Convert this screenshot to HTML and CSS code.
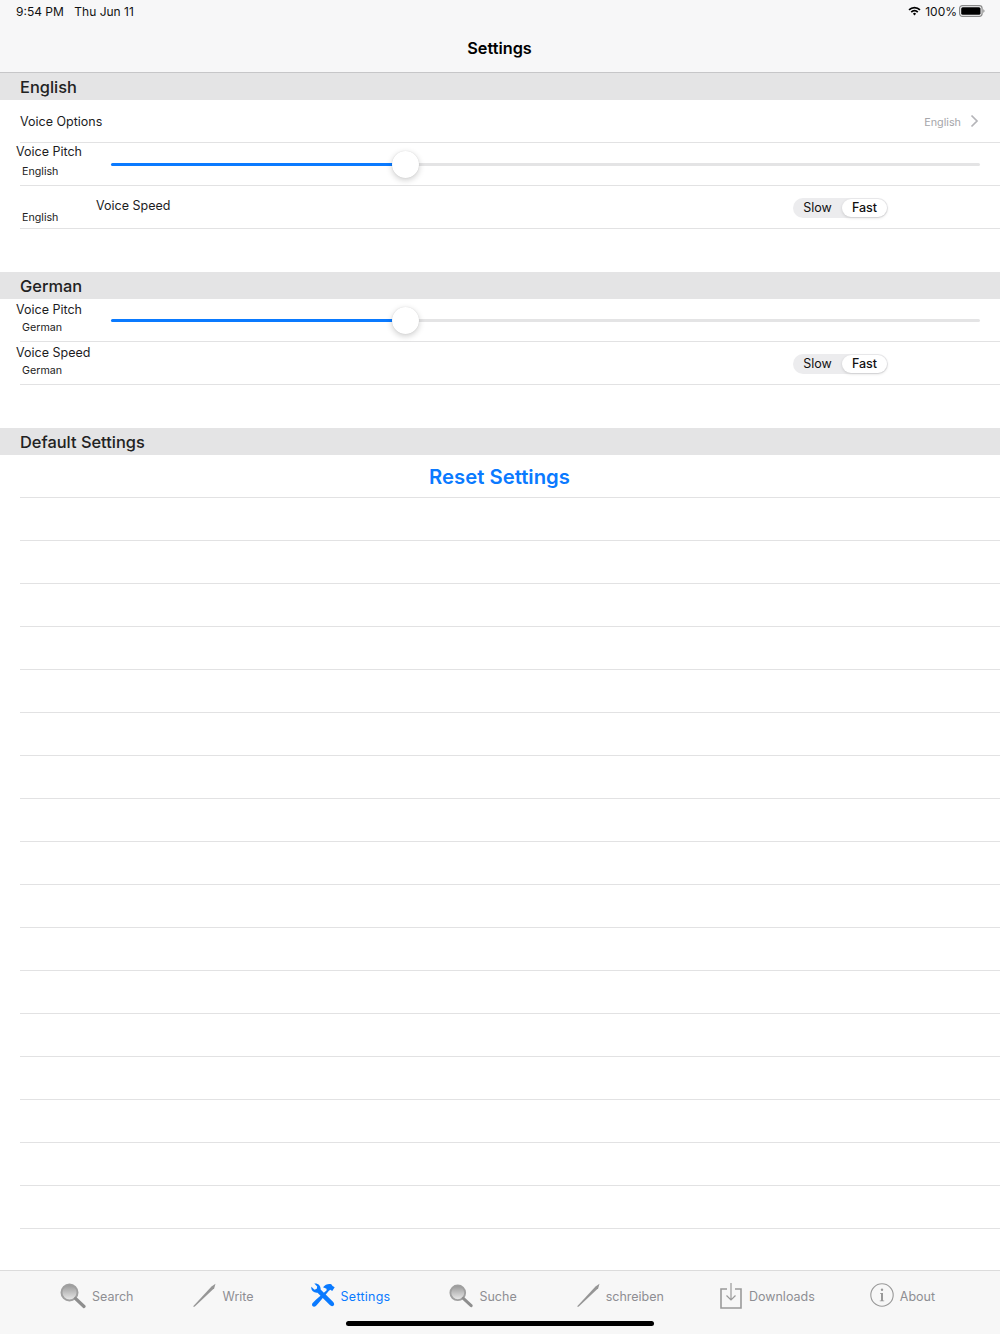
FILE: index.html
```html
<!DOCTYPE html>
<html lang="en">
<head>
<meta charset="utf-8">
<title>Settings</title>
<link rel="stylesheet" href="styles.css">
</head>
<body>
<div class="app">
  <header class="nav">
    <div class="status">
      <div class="status-left"><span>9:54 PM</span><span>Thu Jun 11</span></div>
      <div class="status-right">
        <svg class="wifi" viewBox="0 0 14 11" width="13" height="10"><path d="M1 4.200A8.500 8.500 0 0 1 13 4.200M3.400 6.700a5.100 5.100 0 0 1 7.200 0" fill="none" stroke="#000" stroke-width="1.900"/><path d="M5.300 8.400a2.400 2.400 0 0 1 3.400 0L7 10.400z" fill="#000"/></svg>
        <span>100%</span>
        <svg class="battery" viewBox="0 0 26 12" width="26" height="12"><rect x=".6" y=".6" width="22.500" height="10.800" rx="2.800" fill="none" stroke="#8a8a8a" stroke-width="1.200"/><rect x="2.200" y="2.200" width="19.300" height="7.600" rx="1.500" fill="#000"/><path d="M24.300 4.200c.8.200 1.200 1 1.200 1.800s-.4 1.600-1.200 1.800z" fill="#8a8a8a"/></svg>
      </div>
    </div>
    <h1 class="title">Settings</h1>
  </header>

  <main>
    <h2 class="section">English</h2>
    <div class="row row-options">
      <span class="label">Voice Options</span>
      <span class="detail">English</span>
      <svg class="chevron" viewBox="0 0 9 14" width="9" height="14"><path d="M1.500 1.500 7 7l-5.500 5.500" fill="none" stroke="#b4b4b8" stroke-width="1.700"/></svg>
    </div>
    <div class="row">
      <div class="stack stack-en"><span class="label">Voice Pitch</span><span class="sub">English</span></div>
      <div class="slider"><div class="fill" style="width:33.800%"><span class="thumb"></span></div></div>
    </div>
    <div class="row">
      <span class="sub sub-en">English</span>
      <span class="label label-en">Voice Speed</span>
      <div class="segment"><span class="seg">Slow</span><span class="seg seg-on">Fast</span></div>
    </div>
    <div class="spacer"></div>

    <h2 class="section">German</h2>
    <div class="row">
      <div class="stack"><span class="label">Voice Pitch</span><span class="sub">German</span></div>
      <div class="slider"><div class="fill" style="width:33.800%"><span class="thumb"></span></div></div>
    </div>
    <div class="row">
      <div class="stack"><span class="label">Voice Speed</span><span class="sub">German</span></div>
      <div class="segment"><span class="seg">Slow</span><span class="seg seg-on">Fast</span></div>
    </div>
    <div class="spacer"></div>

    <h2 class="section">Default Settings</h2>
    <div class="row row-reset"><a class="reset">Reset Settings</a></div>
    <div class="row"></div><div class="row"></div><div class="row"></div><div class="row"></div>
    <div class="row"></div><div class="row"></div><div class="row"></div><div class="row"></div>
    <div class="row"></div><div class="row"></div><div class="row"></div><div class="row"></div>
    <div class="row"></div><div class="row"></div><div class="row"></div><div class="row"></div>
    <div class="row"></div>
  </main>

  <nav class="tabs">
    <a class="tab">
      <svg class="icon" viewBox="0 0 26 26" width="26" height="26"><defs><linearGradient id="lens" x1="0" y1="0" x2="0" y2="1"><stop offset="0" stop-color="#979797"/><stop offset="1" stop-color="#ececec"/></linearGradient></defs><circle cx="9.500" cy="9.500" r="8" fill="url(#lens)" stroke="#a0a0a0" stroke-width="2"/><path d="M15.500 15.500l8.500 8" stroke="#8e8e8e" stroke-width="3.200" stroke-linecap="round"/></svg>
      <span>Search</span>
    </a>
    <a class="tab tab-write">
      <svg class="icon" viewBox="0 0 24 24" width="24" height="24"><path d="M1 23.500 19.500 3.500 23.500.8l-1.300 4.500L2.500 23.800z" fill="#969696"/></svg>
      <span>Write</span>
    </a>
    <a class="tab tab-on">
      <svg class="icon" viewBox="0 0 24 24" width="24" height="24"><g fill="#0a7aff"><path d="M.4 3.800 3.500 6.700l2.300-.9.400-2.400L3.300.6C6.500-.2 10 2.500 9.600 6.400L22 18.800c1.300 1.300 1.500 2.800.6 3.800-1 1-2.600.8-3.800-.5L6.500 9.700C2.800 10.200-.4 7.200.4 3.800z"/><path d="M12 4.300C14 1.300 18 .3 20.300 1.300l1.300 1.600 2.100 1.300-2.500 3.700-1.800-1.100-1.500.9L7.800 19.800l-2.900 3.100c-1.100 1-2.600 1-3.400.1-.8-.9-.6-2.300.4-3.300l3-3L15.700 7.300l-.2-1.600z"/></g></svg>
      <span>Settings</span>
    </a>
    <a class="tab tab-suche">
      <svg class="icon" viewBox="0 0 26 26" width="24" height="26"><circle cx="9.500" cy="9.500" r="8" fill="url(#lens)" stroke="#a0a0a0" stroke-width="2"/><path d="M15.500 15.500l8.500 8" stroke="#8e8e8e" stroke-width="3.200" stroke-linecap="round"/></svg>
      <span>Suche</span>
    </a>
    <a class="tab tab-schreiben">
      <svg class="icon" viewBox="0 0 24 24" width="24" height="24"><path d="M1 23.500 19.500 3.500 23.500.8l-1.300 4.500L2.500 23.800z" fill="#969696"/></svg>
      <span>schreiben</span>
    </a>
    <a class="tab tab-downloads">
      <svg class="icon" viewBox="0 0 22 26" width="22" height="26"><path d="M7 6H1v19h20V6h-6" fill="none" stroke="#9a9a9a" stroke-width="1.600"/><path d="M11 0v17M6.500 12.500 11 17l4.500-4.500" fill="none" stroke="#9a9a9a" stroke-width="1.200"/></svg>
      <span>Downloads</span>
    </a>
    <a class="tab tab-about">
      <svg class="icon" viewBox="0 0 24 24" width="24" height="24"><circle cx="12" cy="12" r="11.200" fill="none" stroke="#999" stroke-width="1.100"/><circle cx="12" cy="6.800" r="1.200" fill="#999"/><path d="M10 10h3v7.500h1.200v.8H9.800v-.8H11v-6.700h-1z" fill="#999"/></svg>
      <span>About</span>
    </a>
    <span class="home"></span>
  </nav>
</div>
</body>
</html>
```
FILE: styles.css
```css
* { box-sizing: border-box; }
html, body { margin: 0; padding: 0; }
body { background: #fff; font-family: Inter, "Liberation Sans", sans-serif; color: #1c1c1e; }
.app { width: 1000px; height: 1334px; display: flex; flex-direction: column; overflow: hidden; }

.nav { height: 73px; background: #f7f7f8; border-bottom: 1px solid #c6c6c8; padding: 0 15px 0 16px; flex: none; }
.status { height: 22px; display: flex; justify-content: space-between; align-items: center; font-size: 12px; color: #111; }
.status-left { display: flex; gap: 10.500px; }
.status-right { display: flex; align-items: center; gap: 4.500px; }
.battery { margin-left: -2.500px; }
.title { margin: 0; padding: 6px 2px 0 0; text-align: center; font-size: 16.300px; line-height: 40px; height: 46px; font-weight: 600; color: #000; }

main { flex: 1; display: flex; flex-direction: column; }
.section { margin: 0; height: 27px; line-height: 28px; flex: none; background: #e4e4e5; padding-left: 20px; font-size: 16.400px; font-weight: 500; color: #222; }
.spacer { height: 43px; flex: none; }
.row { height: 43px; flex: none; margin-left: 20px; border-bottom: 1px solid #e2e2e3; display: flex; align-items: center; }
.label { font-size: 12.500px; line-height: 16px; color: #1c1c1e; }
.sub { font-size: 10.700px; line-height: 14px; color: #222; }

.row-options .label { flex: 1; margin-top: 2px; }
.detail { font-size: 10.800px; color: #a6a6aa; margin-top: 2px; }
.chevron { margin: 0 21px 0 9px; }

.stack { width: 95px; margin-left: -4px; flex: none; display: flex; flex-direction: column; align-self: flex-start; padding-top: 3px; }
.stack .label { height: 16px; }
.stack .sub { margin: 3px 0 0 6px; }
.stack-en { padding-top: 1px; }
.stack-en .sub { margin-top: 5px; }

.slider { flex: 1; height: 3px; margin-right: 20px; background: #e4e4e5; border-radius: 2px; }
.fill { height: 3px; background: #0a7aff; border-radius: 2px; position: relative; }
.thumb { position: absolute; right: -14px; top: -12px; width: 27px; height: 27px; border-radius: 50%; background: #fff; box-shadow: 0 2px 6px rgba(0,0,0,.2), 0 0 1px rgba(0,0,0,.15); }

.sub-en { margin: 22px 0 0 2px; width: 74px; flex: none; }
.label-en { flex: none; margin-top: -3px; }

.segment { margin: 2px 112px 0 auto; width: 95px; height: 20px; background: #ececee; border-radius: 10px; display: flex; font-size: 12.500px; line-height: 20px; }
.seg { width: 47px; padding-left: 2px; text-align: center; color: #111; }
.seg-on { width: 45px; padding-left: 0; margin: 1px 1px 0 auto; background: #fff; border-radius: 9px; height: 18px; line-height: 18px; font-weight: 500; box-shadow: 0 1px 3px rgba(0,0,0,.15); }

.row-reset { justify-content: center; padding-right: 21px; }
.reset { font-size: 20.300px; font-weight: 600; color: #0a7aff; }

.tabs { height: 64px; flex: none; background: #f7f7f7; border-top: 1px solid #dcdcdc; display: flex; gap: 58px; padding: 12px 0 0 60px; position: relative; }
.tab { display: flex; align-items: flex-start; gap: 6px; color: #8e8e93; font-size: 12.500px; line-height: 28px; height: 26px; }
.tab-write { margin-left: 1px; }
.tab-on { margin-left: -1px; color: #0a7aff; letter-spacing: .25px; }
.tab-suche { margin-left: 1px; }
.tab-schreiben { margin-left: 1px; }
.tab-downloads { margin-left: -2px; gap: 7px; }
.tab-about { margin-left: -3px; }
.icon { flex: none; }
.home { position: absolute; left: 346px; top: 50px; width: 308px; height: 5px; background: #000; border-radius: 3px; }
```
